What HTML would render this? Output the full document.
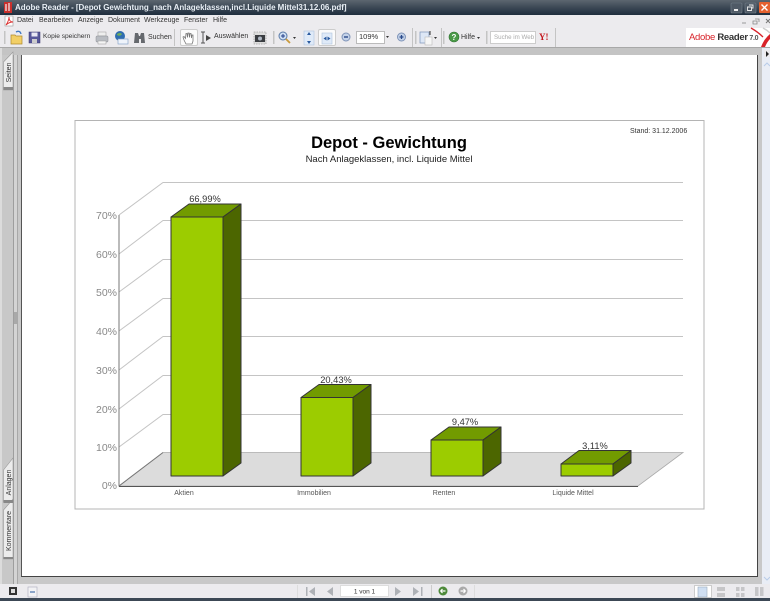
<!DOCTYPE html>
<html><head><meta charset="utf-8"><style>
html,body{margin:0;padding:0;width:770px;height:601px;overflow:hidden;background:#c8c8c8;font-family:"Liberation Sans",sans-serif}
#w{position:absolute;left:0;top:0;width:770px;height:601px;overflow:hidden;background:#c8c8c8;filter:blur(.35px)}
.a{position:absolute}
.t{position:absolute;white-space:nowrap;font-size:7px;color:#333;line-height:10px}
svg{position:absolute;left:0;top:0}
svg text{font-family:"Liberation Sans",sans-serif}
</style></head><body><div id="w">
<div class="a" style="left:0;top:0;width:770px;height:15px;background:linear-gradient(#5c6670,#3c4855 50%,#1f2e3e)"></div>
<div class="t" style="left:15px;top:3px;font-size:8px;font-weight:bold;color:#e8eef4;letter-spacing:-.03px">Adobe Reader - [Depot Gewichtung_nach Anlageklassen,incl.Liquide Mittel31.12.06.pdf]</div>
<div class="a" style="left:0;top:15px;width:770px;height:33px;background:#ecebee"></div>
<div class="a" style="left:0;top:47px;width:770px;height:8px;background:#c4c4c4;border-top:1px solid #a8a8a8;box-sizing:border-box"></div>
<div class="t" style="left:17px;top:16px">Datei</div>
<div class="t" style="left:39px;top:16px">Bearbeiten</div>
<div class="t" style="left:78px;top:16px">Anzeige</div>
<div class="t" style="left:108px;top:16px">Dokument</div>
<div class="t" style="left:144px;top:16px">Werkzeuge</div>
<div class="t" style="left:184px;top:16px">Fenster</div>
<div class="t" style="left:213px;top:16px">Hilfe</div>
<div class="t" style="left:43px;top:32px;font-size:6.6px">Kopie speichern</div>
<div class="t" style="left:148px;top:33px">Suchen</div>
<div class="a" style="left:180px;top:29px;width:18px;height:17px;background:#fbfbfb;border:1px solid #ccc;border-radius:2px;box-sizing:border-box"></div>
<div class="t" style="left:214px;top:32px">Auswählen</div>
<div class="a" style="left:318px;top:29px;width:18px;height:17px;background:#fbfbfb;border:1px solid #ccc;border-radius:2px;box-sizing:border-box"></div>
<div class="a" style="left:356px;top:31px;width:29px;height:13px;background:#fff;border:1px solid #bbb;box-sizing:border-box"></div>
<div class="t" style="left:359px;top:32px;font-size:7.5px">109%</div>
<div class="t" style="left:461px;top:33px">Hilfe</div>
<div class="a" style="left:490px;top:31px;width:46px;height:13px;background:#fff;border:1px solid #ccc;box-sizing:border-box"></div>
<div class="t" style="left:494px;top:33px;font-size:6.2px;color:#aaa">Suche im Web</div>
<div class="t" style="left:539px;top:32px;font-size:9px;font-weight:bold;color:#c4161c;font-family:'Liberation Serif',serif">Y!</div>
<div class="a" style="left:686px;top:28px;width:84px;height:19px;background:#fff"></div>
<div class="t" style="left:689px;top:33px;font-size:9.5px;color:#d8232a;letter-spacing:-.3px">Adobe<span style="color:#333;font-weight:bold">&nbsp;Reader</span><span style="font-size:7px;color:#555;font-weight:bold">&nbsp;7.0</span></div>
<div class="a" style="left:0;top:55px;width:18px;height:529px;background:#c8c8c8"></div>
<div class="a" style="left:0;top:48px;width:2px;height:536px;background:#dcdcdc"></div>
<div class="a" style="left:13px;top:55px;width:1px;height:529px;background:#9e9e9e"></div>
<div class="a" style="left:14px;top:55px;width:3px;height:529px;background:#d4d4d4"></div>
<div class="a" style="left:17px;top:55px;width:1px;height:529px;background:#a8a8a8"></div>
<div class="a" style="left:21px;top:55px;width:737px;height:522px;background:#fff;border-left:1px solid #555;border-bottom:1px solid #444;border-right:1px solid #444;box-sizing:border-box"></div>
<div class="a" style="left:762px;top:48px;width:8px;height:536px;background:#e9edf5"></div>

<svg width="770" height="601" viewBox="0 0 770 601">
<!-- tabs -->
<g fill="#ececec" stroke="#999" stroke-width=".6">
<path d="M3.500 62L13 52V90H3.500z"/>
<path d="M3.500 470L13 458V502H3.500z"/>
<path d="M3.500 510L13 499V559H3.500z"/>
</g>
<g fill="#888"><rect x="3.500" y="87" width="9.500" height="3"/><rect x="3.500" y="500" width="9.500" height="3"/><rect x="3.500" y="557" width="9.500" height="2"/></g>
<!-- title bar icons -->
<rect x="4" y="2" width="8" height="11" fill="#c9302c"/><path d="M6 4v7M9 3v8" stroke="#f2f2f2" stroke-width="1.2"/>
<rect x="731" y="3" width="11" height="10" rx="1" fill="#4f5a66" stroke="#77818c" stroke-width=".6"/><rect x="734" y="9" width="4" height="2" fill="#eee"/>
<rect x="745" y="3" width="11" height="10" rx="1" fill="#4f5a66" stroke="#77818c" stroke-width=".6"/><path d="M749 5h4v3h-1M747.500 7h4v3.500h-4z" fill="none" stroke="#eee" stroke-width=".9"/>
<rect x="759" y="2" width="11" height="11" rx="1" fill="#e5612f"/><path d="M761.500 4.500l6 6M767.500 4.500l-6 6" stroke="#fff" stroke-width="1.400"/>
<path d="M742 23h4" stroke="#999" stroke-width="1"/><path d="M755 19h4v3M753 21h4v3h-4z" fill="none" stroke="#888" stroke-width=".8"/><path d="M766 19l4 4M770 19l-4 4" stroke="#777" stroke-width="1"/>
<!-- pdf menu icon -->
<rect x="5" y="16" width="8" height="10" fill="#fff" stroke="#999" stroke-width=".6"/><path d="M6 25c2-3 3-6 3-8 0 3 1 5 4 5-3 0-5 1-7 3z" fill="none" stroke="#d33" stroke-width=".9"/>
<!-- toolbar separators -->
<g fill="#c4c4c4"><rect x="4" y="31" width="1.500" height="13"/><rect x="174" y="29" width="1" height="17"/><rect x="273" y="31" width="1.500" height="13"/><rect x="415" y="31" width="1.500" height="13"/><rect x="443" y="31" width="1.500" height="13"/><rect x="486" y="31" width="1.500" height="13"/><rect x="555" y="28" width="1" height="19"/><rect x="412" y="28" width="1" height="19"/><rect x="441" y="28" width="1" height="19"/></g>
<!-- folder -->
<path d="M11 35h4l1 1h6v8H11z" fill="#f2cf66" stroke="#b08a2c" stroke-width=".7"/><path d="M16 32q4-2 5 2" fill="none" stroke="#3f78c0" stroke-width="1.300"/>
<!-- save -->
<rect x="29" y="32" width="11" height="11" fill="#57579a" stroke="#33336a" stroke-width=".5"/><rect x="31.500" y="32.500" width="6" height="4" fill="#e8e8f4"/><rect x="32" y="39" width="5" height="4" fill="#ccc"/>
<!-- print -->
<rect x="98" y="32" width="8" height="4" fill="#eee" stroke="#999" stroke-width=".5"/><rect x="96" y="36" width="12" height="6" rx="1" fill="#b9bcc2" stroke="#8a8d92" stroke-width=".5"/><rect x="98" y="41" width="8" height="3" fill="#f4f4f4" stroke="#999" stroke-width=".5"/>
<!-- mail globe -->
<circle cx="120" cy="36" r="5" fill="#2f6db0"/><path d="M117 34q3-2 5 0q-2 3-5 1z" fill="#6fae5a"/><rect x="118" y="39" width="10" height="5" fill="#eef3fa" stroke="#7a9cc4" stroke-width=".6"/>
<!-- binoculars -->
<path d="M135 33h3l1 3h1l1-3h3l1 10h-4v-4h-2v4h-5z" fill="#66696e"/>
<!-- hand -->
<path d="M186 44l-2-4-1-3 1-.5 1.500 2 .5-5h1l.5 4 .5-4.500h1l.5 4.500.5-4h1l.5 4.500.5-3h1v6l-1 3z" fill="#fff" stroke="#777" stroke-width=".8"/>
<!-- select -->
<path d="M201 32h4M201 43h4M203 32v11" stroke="#555" stroke-width="1" fill="none"/><path d="M206 35l5 3-5 3z" fill="#444"/>
<!-- snapshot -->
<rect x="254" y="32" width="12" height="12" fill="#ddd" stroke="#888" stroke-width=".6" stroke-dasharray="1.500 1"/><rect x="255" y="35" width="10" height="7" fill="#3a3d42"/><circle cx="260" cy="38.500" r="2" fill="#b0b8c4"/>
<!-- zoom -->
<circle cx="283" cy="36" r="4" fill="#cfe0f4" stroke="#5a7ba8"/><path d="M281 36h4M283 34v4" stroke="#24408a" stroke-width="1"/><path d="M286 39l4 4" stroke="#c99a3c" stroke-width="1.800"/>
<path d="M293 37h3l-1.500 2z" fill="#333"/>
<!-- fit page -->
<rect x="304" y="31" width="10" height="14" fill="#dfeaf8" stroke="#b0c4de" stroke-width=".6"/><path d="M309 32l-2 3h4zM309 44l-2-3h4z" fill="#2a5aa0"/>
<rect x="322" y="33" width="10" height="11" fill="#dfeaf8" stroke="#b0c4de" stroke-width=".6"/><path d="M323.500 38.500l3-2v4zM330.500 38.500l-3-2v4z" fill="#2a5aa0"/>
<!-- zoom out / in -->
<circle cx="346" cy="37" r="4" fill="#c4d2e8" stroke="#7f94b8"/><rect x="344" y="36.300" width="4" height="1.400" fill="#2a4a8a"/>
<path d="M386 36h3l-1.500 2z" fill="#333"/>
<circle cx="401.500" cy="37" r="4" fill="#c4d2e8" stroke="#7f94b8"/><path d="M399.500 37h4M401.500 35v4" stroke="#2a4a8a" stroke-width="1.300"/>
<!-- rotate pages -->
<rect x="420" y="32" width="9" height="11" fill="#dde7f6" stroke="#7a92b8" stroke-width=".7"/><rect x="425" y="37" width="7" height="8" fill="#f6f6f6" stroke="#bbb" stroke-width=".6"/><path d="M430 31v4" stroke="#333" stroke-width="1"/>
<path d="M434 37h3l-1.500 2z" fill="#333"/>
<circle cx="454" cy="37" r="5" fill="#4a9a48" stroke="#2f7030" stroke-width=".6"/><text x="451.500" y="40" font-size="8" font-weight="bold" fill="#fff">?</text>
<path d="M477 37h3l-1.500 2z" fill="#333"/>
<!-- reader logo swoosh -->
<path d="M751 28q7 4 12 9" fill="none" stroke="#d8232a" stroke-width="1.300"/><path d="M763 28q4 2 7 5" fill="none" stroke="#ccc" stroke-width="1.500"/><path d="M770 34q-6 5-9 13h4q2-5 5-8z" fill="#d8232a"/>
<!-- grip -->
<rect x="14" y="312" width="3" height="12" fill="#a9a9a9"/>
<rect x="764" y="50" width="6" height="7" fill="#ecebee"/><path d="M766 51l3 3-3 3z" fill="#222"/><path d="M764 66l3-3 3 3M764 577l3 3 3-3" stroke="#b8cce8" fill="none"/>
<!-- status -->
<rect x="0" y="584" width="770" height="14" fill="#ecebee"/>
<rect x="0" y="598" width="770" height="3" fill="#3c4855"/>
<rect x="340.500" y="585.500" width="48" height="11" fill="#fff" stroke="#ddd"/>
<rect x="694.500" y="585.500" width="17" height="12" fill="#fff" stroke="#ccc"/>
<rect x="9" y="587" width="8" height="8" fill="#333"/><rect x="11" y="589" width="4" height="4" fill="#ddd"/><rect x="28" y="587" width="9" height="10" fill="#f2f2f4" stroke="#aab" stroke-width=".6"/><rect x="30" y="591" width="5" height="2" fill="#8aa4c8"/>
<g fill="#aeb1b6"><rect x="306" y="587" width="1.500" height="9"/><path d="M315 587v9l-6-4.500zM333 587v9l-6-4.500zM395 587v9l6-4.500zM413 587v9l6-4.500z"/><rect x="421" y="587" width="1.500" height="9"/></g>
<rect x="431" y="585" width="1" height="13" fill="#ccc"/><rect x="474" y="585" width="1" height="13" fill="#ddd"/><rect x="297" y="585" width="1" height="13" fill="#ddd"/>
<circle cx="443" cy="591" r="4.500" fill="#4e8a3a"/><path d="M440.500 591h5M440.500 591l2-2M440.500 591l2 2" stroke="#fff" stroke-width="1.200"/>
<circle cx="463" cy="591" r="4.500" fill="#aaa"/><path d="M460.500 591h5M465.500 591l-2-2M465.500 591l-2 2" stroke="#fff" stroke-width="1.200"/>
<rect x="698" y="587" width="9" height="10" fill="#cfdff2" stroke="#9ab" stroke-width=".6"/>
<g fill="#c6c6c8"><rect x="717" y="587" width="8" height="4"/><rect x="717" y="593" width="8" height="4"/><rect x="736" y="587" width="3.500" height="4"/><rect x="741" y="587" width="3.500" height="4"/><rect x="736" y="593" width="3.500" height="4"/><rect x="741" y="593" width="3.500" height="4"/><rect x="755" y="587" width="3.500" height="9"/><rect x="760" y="587" width="3.500" height="9"/></g>
<text x="364.500" y="593.500" font-size="6.500" fill="#333" text-anchor="middle">1 von 1</text>

<!-- chart frame -->
<rect x="75" y="120.500" width="629" height="388.500" fill="#fff" stroke="#b4b4b4"/>
<text x="630" y="133" font-size="7" fill="#333">Stand: 31.12.2006</text>
<text x="389" y="148" font-size="16.500" font-weight="bold" fill="#000" text-anchor="middle">Depot - Gewichtung</text>
<text x="389" y="162" font-size="9.500" fill="#222" text-anchor="middle">Nach Anlageklassen, incl. Liquide Mittel</text>

<!-- floor -->
<path d="M119 486L163 452.500H683L638 486z" fill="#dcdcdc" stroke="#aaa" stroke-width=".8"/>
<path d="M119 486L163 452.500" stroke="#777"/>
<path d="M119 486.500H638" stroke="#555" stroke-width="1"/>
<!-- grid -->
<g fill="none" stroke="#c4c4c4">
<path d="M119 215L163 182.500H683"/>
<path d="M119 254L163 220.500H683"/>
<path d="M119 292L163 259.500H683"/>
<path d="M119 331L163 298.500H683"/>
<path d="M119 370L163 336.500H683"/>
<path d="M119 409L163 375.500H683"/>
<path d="M119 447L163 414.500H683"/>
</g>
<path d="M119 215V486" stroke="#777" stroke-width="1"/>
<g font-size="10.500" fill="#888" text-anchor="end">
<text x="117" y="219">70%</text><text x="117" y="258">60%</text><text x="117" y="296">50%</text><text x="117" y="335">40%</text><text x="117" y="374">30%</text><text x="117" y="413">20%</text><text x="117" y="451">10%</text><text x="117" y="489">0%</text>
</g>

<!-- bars -->
<g stroke="#333" stroke-width="1" stroke-linejoin="round">
<path d="M171 217L189 204H241L223 217z" fill="#729b00"/><path d="M223 217L241 204V463L223 476z" fill="#4c6600"/><rect x="171" y="217" width="52" height="259" fill="#9ccc00"/>
<path d="M301 397.500L319 384.500H371L353 397.500z" fill="#729b00"/><path d="M353 397.500L371 384.500V463L353 476z" fill="#4c6600"/><rect x="301" y="397.500" width="52" height="78.500" fill="#9ccc00"/>
<path d="M431 440L449 427H501L483 440z" fill="#729b00"/><path d="M483 440L501 427V463L483 476z" fill="#4c6600"/><rect x="431" y="440" width="52" height="36" fill="#9ccc00"/>
<path d="M561 464L579 450.500H631L613 464z" fill="#729b00"/><path d="M613 464L631 450.500V463L613 476z" fill="#4c6600"/><rect x="561" y="464" width="52" height="12" fill="#9ccc00"/>
</g>
<g font-size="9.300" fill="#333" text-anchor="middle">
<text x="205" y="202">66,99%</text><text x="336" y="383">20,43%</text><text x="465" y="425">9,47%</text><text x="595" y="449">3,11%</text>
</g>
<g font-size="7" fill="#555" text-anchor="middle">
<text x="184" y="495">Aktien</text><text x="314" y="495">Immobilien</text><text x="444" y="495">Renten</text><text x="573" y="495">Liquide Mittel</text>
</g>
<g font-size="7" fill="#333" text-anchor="middle">
<text transform="translate(11 72.500) rotate(-90)">Seiten</text>
<text transform="translate(11 482.500) rotate(-90)">Anlagen</text>
<text transform="translate(11 531) rotate(-90)">Kommentare</text>
</g>
</svg>
</div></body></html>
